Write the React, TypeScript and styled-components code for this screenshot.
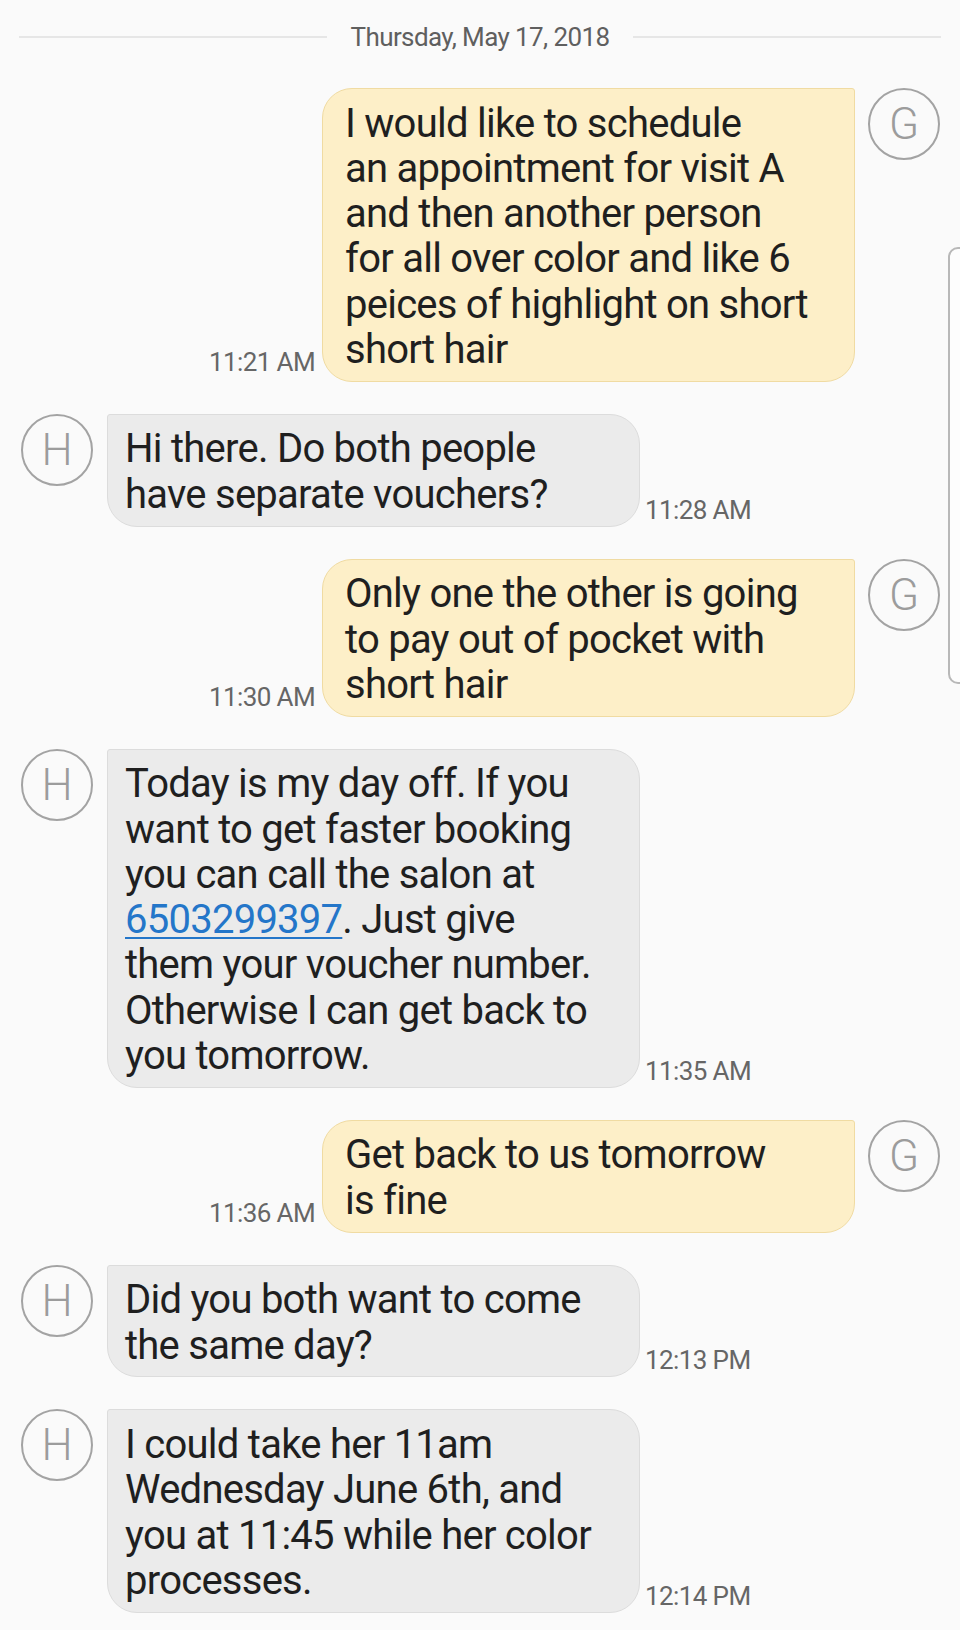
import React from "react";
import styled, { createGlobalStyle } from "styled-components";

const Global = createGlobalStyle`
  html, body { margin: 0; padding: 0; background: #fafafa; }
  body { font-family: Roboto, "Noto Sans", Arial, sans-serif; }
`;

const Screen = styled.div`
  position: relative;
  width: 960px;
  height: 1630px;
  overflow: hidden;
  background: #fafafa;
  box-sizing: border-box;
  padding-top: 19px;
`;

const DateDivider = styled.div`
  display: flex;
  align-items: center;
  gap: 24px;
  padding: 0 19px;
  height: 36px;
  color: #5f5f5f;
  font-size: 26px;
  letter-spacing: -0.6px;
`;

const Rule = styled.div`
  flex: 1;
  height: 2px;
  background: #e6e6e6;
`;

const Thread = styled.div`
  display: flex;
  flex-direction: column;
  gap: 32px;
  margin-top: 33px;
`;

const Row = styled.div<{ $out?: boolean }>`
  display: flex;
  align-items: flex-start;
  justify-content: ${(p) => (p.$out ? "flex-end" : "flex-start")};
  padding: ${(p) => (p.$out ? "0 20px 0 0" : "0 0 0 21px")};
`;

const Avatar = styled.div<{ $out?: boolean }>`
  width: 72px;
  height: 72px;
  box-sizing: border-box;
  border: 2px solid #a3a3a3;
  border-radius: 50%;
  display: flex;
  align-items: center;
  justify-content: center;
  color: #9c9c9c;
  font-size: 44px;
  font-weight: 300;
  flex-shrink: 0;
  margin: ${(p) => (p.$out ? "0 0 0 13px" : "0 14px 0 0")};
`;

const Bubble = styled.div<{ $out?: boolean }>`
  position: relative;
  width: 533px;
  box-sizing: border-box;
  padding: ${(p) => (p.$out ? "11.75px 16px 8.75px 22px" : "11.75px 16px 8.75px 17px")};
  background: ${(p) => (p.$out ? "#fdefc8" : "#ebebeb")};
  border: 1.5px solid ${(p) => (p.$out ? "#f0dba2" : "#dcdcdc")};
  border-radius: ${(p) => (p.$out ? "30px 3px 30px 30px" : "3px 30px 30px 30px")};
  color: #1f1f1f;
  font-size: 40px;
  line-height: 45.2px;
  letter-spacing: -0.75px;
  white-space: nowrap;
`;

const Line = styled.div``;

const Time = styled.div<{ $out?: boolean }>`
  align-self: flex-end;
  color: #666;
  font-size: 26px;
  letter-spacing: -0.6px;
  white-space: nowrap;
  margin: ${(p) => (p.$out ? "0 7px 5px 0" : "0 0 2px 5px")};
`;

const Link = styled.span`
  color: #2476c9;
  text-decoration: underline;
  text-underline-offset: 4px;
  text-decoration-thickness: 2px;
`;

const ScrollHandle = styled.div`
  position: absolute;
  right: -4px;
  top: 247px;
  width: 12px;
  height: 433px;
  background: #fdfdfd;
  border: 2px solid #b8b8b8;
  border-radius: 10px 0 0 10px;
`;

type Msg = { out: boolean; time: string; lines: React.ReactNode[] };

const messages: Msg[] = [
  {
    out: true,
    time: "11:21 AM",
    lines: [
      "I would like to schedule",
      "an appointment for visit A",
      "and then another person",
      "for all over color and like 6",
      "peices of highlight on short",
      "short hair",
    ],
  },
  { out: false, time: "11:28 AM", lines: ["Hi there. Do both people", "have separate vouchers?"] },
  {
    out: true,
    time: "11:30 AM",
    lines: ["Only one the other is going", "to pay out of pocket with", "short hair"],
  },
  {
    out: false,
    time: "11:35 AM",
    lines: [
      "Today is my day off. If you",
      "want to get faster booking",
      "you can call the salon at",
      <>
        <Link>6503299397</Link>. Just give
      </>,
      "them your voucher number.",
      "Otherwise I can get back to",
      "you tomorrow.",
    ],
  },
  { out: true, time: "11:36 AM", lines: ["Get back to us tomorrow", "is fine"] },
  { out: false, time: "12:13 PM", lines: ["Did you both want to come", "the same day?"] },
  {
    out: false,
    time: "12:14 PM",
    lines: ["I could take her 11am", "Wednesday June 6th, and", "you at 11:45 while her color", "processes."],
  },
];

function Body({ lines, out }: { lines: React.ReactNode[]; out: boolean }) {
  return (
    <Bubble $out={out}>
      {lines.map((l, i) => (
        <Line key={i}>{l}</Line>
      ))}
    </Bubble>
  );
}

export default function App() {
  return (
    <>
      <Global />
      <Screen>
        <DateDivider>
          <Rule />
          <span>Thursday, May 17, 2018</span>
          <Rule />
        </DateDivider>
        <Thread>
          {messages.map((m, i) =>
            m.out ? (
              <Row key={i} $out>
                <Time $out>{m.time}</Time>
                <Body lines={m.lines} out />
                <Avatar $out>G</Avatar>
              </Row>
            ) : (
              <Row key={i}>
                <Avatar>H</Avatar>
                <Body lines={m.lines} out={false} />
                <Time>{m.time}</Time>
              </Row>
            )
          )}
        </Thread>
        <ScrollHandle />
      </Screen>
    </>
  );
}
